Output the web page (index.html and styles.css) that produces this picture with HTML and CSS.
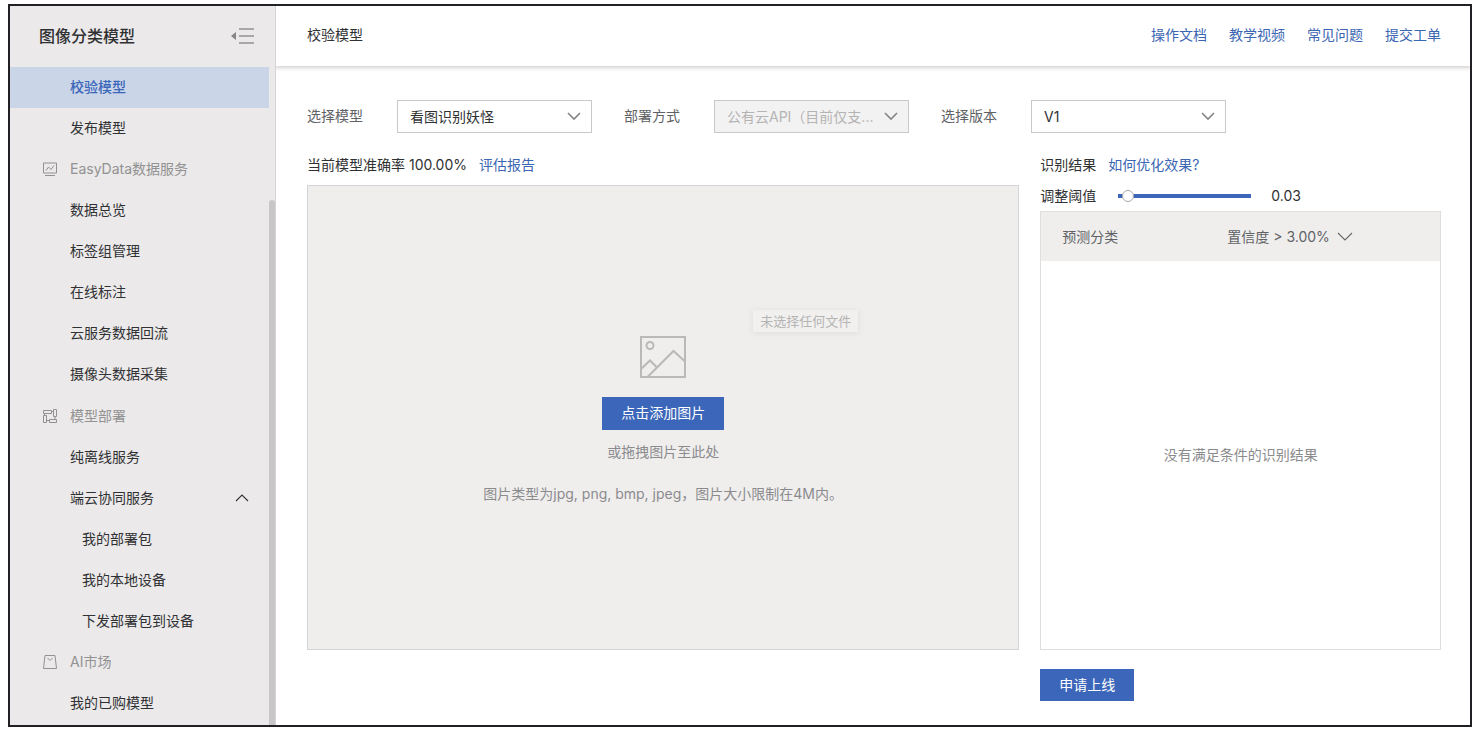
FILE: index.html
```html
<!DOCTYPE html>
<html lang="zh-CN">
<head>
<meta charset="utf-8">
<meta name="viewport" content="width=device-width, initial-scale=1">
<title>校验模型</title>
<link rel="stylesheet" href="styles.css">
</head>
<body>
<div class="app">
  <aside class="sidebar">
    <div class="sidebar-head">
      <h1 class="sidebar-title">图像分类模型</h1>
      <button class="collapse" type="button" aria-label="收起">
        <svg width="24" height="18" viewBox="0 0 24 18"><path d="M5 5v8L0 9z" fill="#858585"/><path d="M8 2h15M8 9h15M8 16h15" stroke="#929292" stroke-width="1.3"/></svg>
      </button>
    </div>
    <div class="sidebar-body">
      <nav class="menu">
        <a class="item active" href="#">校验模型</a>
        <a class="item" href="#">发布模型</a>
        <div class="item group">
          <svg class="group-icon" width="16" height="16" viewBox="0 0 16 16"><path d="M1.500 2h13v10h-13zM4 9.500l2.500-3.500 2.500 2.500L12 4.500M3 14.500h10"/></svg>
          EasyData数据服务
        </div>
        <a class="item" href="#">数据总览</a>
        <a class="item" href="#">标签组管理</a>
        <a class="item" href="#">在线标注</a>
        <a class="item" href="#">云服务数据回流</a>
        <a class="item" href="#">摄像头数据采集</a>
        <div class="item group">
          <svg class="group-icon" width="16" height="16" viewBox="0 0 16 16"><path d="M1.500 2.500h8v3h-8zM11.500 1.500h3v7h-3zM1.500 7.500h3v7h-3zM7.500 11.500h7v3h-7zM9.500 3.500h2M2.500 5.500v2M13 8.500v3M4.500 12.500h3"/></svg>
          模型部署
        </div>
        <a class="item" href="#">纯离线服务</a>
        <a class="item" href="#">端云协同服务
          <svg class="item-arrow" width="14" height="8" viewBox="0 0 14 8"><path d="M1 7l6-6 6 6" fill="none" stroke="#333" stroke-width="1.1"/></svg>
        </a>
        <a class="item sub" href="#">我的部署包</a>
        <a class="item sub" href="#">我的本地设备</a>
        <a class="item sub" href="#">下发部署包到设备</a>
        <div class="item group">
          <svg class="group-icon" width="16" height="16" viewBox="0 0 16 16"><path d="M3 1.500h10l1.500 13h-13zM5.500 4l2.500 2.500L10.500 4"/></svg>
          AI市场
        </div>
        <a class="item" href="#">我的已购模型</a>
      </nav>
      <div class="scrollbar"><div class="thumb"></div></div>
    </div>
  </aside>

  <main class="main">
    <header class="topbar">
      <h2 class="page-title">校验模型</h2>
      <nav class="links">
        <a href="#">操作文档</a>
        <a href="#">教学视频</a>
        <a href="#">常见问题</a>
        <a href="#">提交工单</a>
      </nav>
    </header>

    <div class="content">
      <form class="filters">
        <label class="filter-label" for="model">选择模型</label>
        <div class="select-box">
          <select id="model"><option>看图识别妖怪</option></select>
          <svg class="caret" width="14" height="9" viewBox="0 0 14 9"><path d="M1 1l6 6 6-6"/></svg>
        </div>
        <label class="filter-label" for="deploy">部署方式</label>
        <div class="select-box">
          <select id="deploy" disabled><option>公有云API（目前仅支...</option></select>
          <svg class="caret" width="14" height="9" viewBox="0 0 14 9"><path d="M1 1l6 6 6-6"/></svg>
        </div>
        <label class="filter-label" for="version">选择版本</label>
        <div class="select-box">
          <select id="version"><option>V1</option></select>
          <svg class="caret" width="14" height="9" viewBox="0 0 14 9"><path d="M1 1l6 6 6-6"/></svg>
        </div>
      </form>

      <div class="columns">
        <section class="upload">
          <p class="line">当前模型准确率 100.00% <a href="#">评估报告</a></p>
          <div class="dropzone">
            <svg width="48" height="42" viewBox="0 0 48 42" fill="none" stroke="#b9b9b9" stroke-width="2"><path d="M2 1h44v40H2zM2 33l9-8.500 7 7M9 40.500L34.500 15 46 25.500"/><circle cx="11" cy="9.500" r="3.500"/></svg>
            <button class="primary add" type="button">点击添加图片</button>
            <p class="hint">或拖拽图片至此处</p>
            <p class="hint limits">图片类型为jpg, png, bmp, jpeg，图片大小限制在4M内。</p>
            <span class="tooltip" role="tooltip">未选择任何文件</span>
          </div>
        </section>

        <section class="result">
          <p class="line">识别结果 <a href="#">如何优化效果?</a></p>
          <div class="threshold">
            <label for="threshold">调整阈值</label>
            <input id="threshold" class="slider" type="range" min="0" max="1" step="0.01" value="0.03">
            <output for="threshold">0.03</output>
          </div>
          <div class="result-box">
            <table class="result-table">
              <thead>
                <tr>
                  <th class="col-class" scope="col">预测分类</th>
                  <th scope="col">
                    <button class="confidence" type="button">置信度 &gt; 3.00%
                      <svg width="16" height="9" viewBox="0 0 16 9"><path d="M1 1l7 7 7-7" fill="none" stroke="#666" stroke-width="1.1"/></svg>
                    </button>
                  </th>
                </tr>
              </thead>
            </table>
            <div class="empty">没有满足条件的识别结果</div>
          </div>
        </section>
      </div>

      <div class="columns footer">
        <button class="primary apply" type="button">申请上线</button>
      </div>
    </div>
  </main>
</div>
</body>
</html>
```

FILE: styles.css
```css
* {
  box-sizing: border-box;
}

body {
  margin: 4px 7px 4px 8px;
  background: #fff;
  color: #303133;
  font: 14px/20px Inter, "Noto Sans CJK SC", sans-serif;
}

button,
select {
  font: inherit;
  color: inherit;
}

h1,
h2,
p {
  margin: 0;
}

a {
  color: #3b66b2;
  text-decoration: none;
}

.app {
  display: flex;
  min-height: calc(100vh - 8px);
  border: 2px solid #222024;
}

/* Sidebar */
.sidebar {
  display: flex;
  flex-direction: column;
  flex: none;
  width: 266px;
  background: #ebe9ea;
  border-right: 1px solid #d6d4d5;
}

.sidebar-head {
  display: flex;
  align-items: center;
  justify-content: space-between;
  height: 61px;
  padding: 0 20px 2px 29px;
}

.sidebar-title {
  font-size: 16px;
  font-weight: 500;
}

.collapse {
  display: flex;
  padding: 0;
  border: 0;
  background: none;
}

.sidebar-body {
  display: flex;
  flex: 1;
}

.menu {
  display: flex;
  flex-direction: column;
  flex: 1;
}

.item {
  display: flex;
  flex: 1;
  align-items: center;
  min-height: 41px;
  padding: 0 20px 2px 60px;
  color: #303133;
}

.item.active {
  background: #cad5e8;
  color: #3b66b9;
  font-weight: 500;
}

.item.sub {
  padding-left: 72px;
}

.item.group {
  gap: 12px;
  padding-left: 32px;
  color: #929292;
}

.group-icon {
  fill: none;
  stroke: #929292;
}

.item-arrow {
  margin-left: auto;
}

.scrollbar {
  display: flex;
  flex-direction: column;
  width: 6px;
  padding-top: 133px;
}

.thumb {
  flex: 1;
  border-radius: 3px 3px 0 0;
  background: #c8c6c7;
}

/* Main area */
.main {
  display: flex;
  flex-direction: column;
  flex: 1;
  min-width: 0;
}

.topbar {
  display: flex;
  align-items: center;
  justify-content: space-between;
  height: 60px;
  padding: 0 29px 2px 31px;
  box-shadow: 0 1px 4px 1px #d4d2d0;
  clip-path: inset(0 0 -8px 0);
}

.page-title {
  font-size: 14px;
  font-weight: 400;
}

.links {
  display: flex;
  gap: 22px;
}

.content {
  display: flex;
  flex-direction: column;
  flex: 1;
  padding: 34px 29px 24px 31px;
}

.filters {
  display: flex;
  align-items: center;
  gap: 32px;
}

.filter-label {
  width: 58px;
  padding-bottom: 2px;
  color: #606266;
}

.select-box {
  display: grid;
  align-items: center;
  width: 195px;
}

.select-box select,
.caret {
  grid-area: 1 / 1;
}

.select-box select {
  width: 100%;
  height: 33px;
  padding: 0 30px 0 12px;
  border: 1px solid #c9c9c9;
  border-radius: 0;
  background: #fff;
  appearance: none;
}

.select-box select:disabled {
  background: #f3f2f2;
  color: #b4b4b4;
  opacity: 1;
}

.caret {
  justify-self: end;
  margin-right: 11px;
  fill: none;
  stroke: #858585;
  stroke-width: 1.6;
  pointer-events: none;
}

.columns {
  display: grid;
  grid-template-columns: 16fr 9fr;
  column-gap: 21px;
}

.columns:not(.footer) {
  flex: 1;
  padding-top: 22px;
}

.upload,
.result {
  display: flex;
  flex-direction: column;
  min-width: 0;
}

.line a {
  margin-left: 8px;
}

.dropzone {
  position: relative;
  display: flex;
  flex: 1;
  flex-direction: column;
  align-items: center;
  justify-content: center;
  margin-top: 10px;
  padding-top: 4px;
  border: 1px solid #d3d4d8;
  background: #efeeed;
}

.primary {
  border: 0;
  background: #3b66b9;
  color: #fff;
}

.add {
  min-width: 122px;
  height: 33px;
  margin: 19px 0 12px;
}

.hint {
  color: #8b8b8d;
}

.limits {
  margin-top: 22px;
}

.tooltip {
  position: absolute;
  top: calc(50% - 108px);
  left: calc(50% + 90px);
  padding: 1px 7px;
  background: #f1f0ef;
  box-shadow: 0 1px 6px #dddcdb;
  color: #b4b4b4;
  font-size: 13px;
}

.threshold {
  display: flex;
  align-items: center;
  gap: 20px;
  margin-top: 11px;
}

.threshold label {
  width: 58px;
}

.slider {
  width: 133px;
  height: 12px;
  margin: 0;
  background: linear-gradient(#3b66b9, #3b66b9) center / 100% 4px no-repeat;
  appearance: none;
}

.slider::-webkit-slider-thumb {
  width: 12px;
  height: 12px;
  border: 1px solid #a9a9a9;
  border-radius: 50%;
  background: #fff;
  appearance: none;
}

.result-box {
  display: flex;
  flex: 1;
  flex-direction: column;
  margin-top: 5px;
  border: 1px solid #dedede;
}

.result-table {
  width: 100%;
  border-collapse: collapse;
  background: #efeeed;
  color: #606266;
  text-align: left;
}

.result-table th {
  height: 49px;
  padding: 0;
  font-weight: 400;
}

.result-table .col-class {
  width: 186px;
  padding-left: 21px;
}

.confidence {
  display: flex;
  align-items: center;
  gap: 7px;
  padding: 0;
  border: 0;
  background: none;
}

.empty {
  display: flex;
  flex: 1;
  align-items: center;
  justify-content: center;
  color: #8b8b8d;
}

.footer {
  padding-top: 19px;
}

.apply {
  grid-column: 2;
  justify-self: start;
  min-width: 94px;
  height: 32px;
}
```
